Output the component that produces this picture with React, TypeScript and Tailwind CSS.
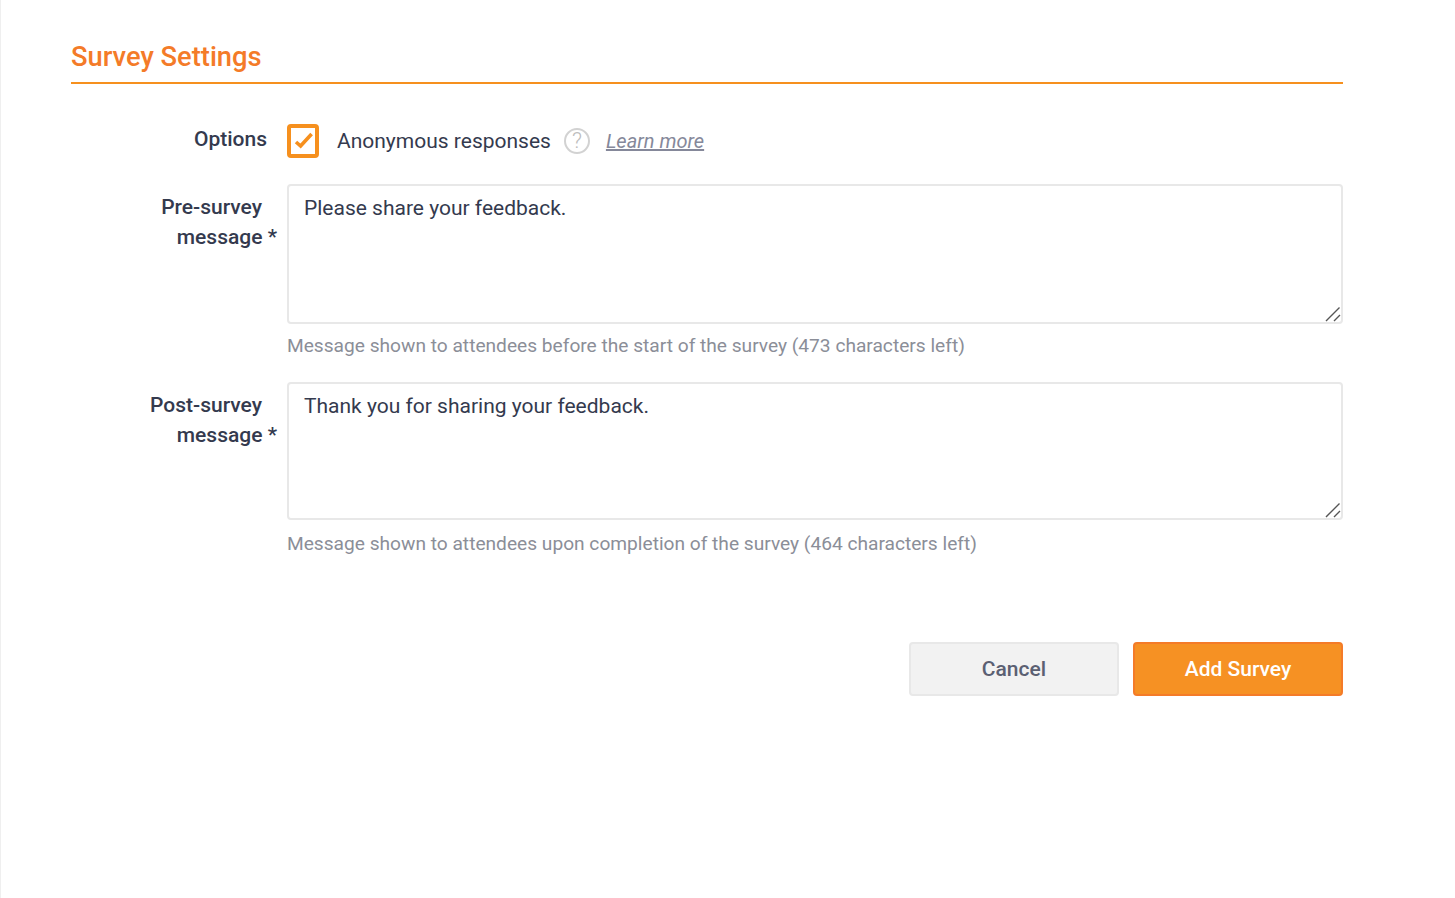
function FieldLabel({ first }: { first: string }) {
  return (
    <div className="w-[206px] shrink-0 pt-[8px] text-right text-[21px] leading-[30px] font-medium text-[#343a4e]">
      <div className="pr-[15px]">{first}</div>
      <div>message *</div>
    </div>
  );
}

function MessageField({
  label,
  value,
  hint,
  height,
  hintGap,
}: {
  label: string;
  value: string;
  hint: string;
  height: string;
  hintGap: string;
}) {
  return (
    <div className="flex gap-[10px]">
      <FieldLabel first={label} />
      <div className="flex-1">
        <div className="relative">
          <textarea
            defaultValue={value}
            className={`${height} block w-full resize-none rounded-[4px] border-2 border-[#e8e8e8] bg-white px-[15px] py-[7px] text-[21px] leading-[30px] text-[#343a4e] outline-none`}
          />
          <svg className="pointer-events-none absolute right-[2px] bottom-[2px] h-[16px] w-[16px]" viewBox="0 0 16 16">
            <path d="M1 15 L14.5 1.5 M9 15 L15 9" stroke="#555" strokeWidth="1.4" fill="none" />
          </svg>
        </div>
        <p className={`${hintGap} text-[19.15px] leading-[30px] text-[#8b8e98]`}>{hint}</p>
      </div>
    </div>
  );
}

export default function App() {
  return (
    <div className="min-h-[898px] border-l border-[#efefef] bg-white pt-[38px] pr-[112px] pl-[70px] font-['Roboto',sans-serif]">
      <h2 className="border-b-2 border-[#f6901e] pb-[6px] text-[27.3px] leading-[38px] font-medium text-[#f47b28]">
        Survey Settings
      </h2>

      <div className="mt-[40px] flex items-center">
        <div className="mb-[4px] w-[196px] text-right text-[21px] leading-[30px] font-medium text-[#343a4e]">
          Options
        </div>
        <div className="ml-[20px] h-[34px] w-[32px] rounded-[4px] border-[4px] border-[#f6901e] bg-white">
          <svg className="h-[26px] w-[24px]" viewBox="0 0 24 26">
            <path d="M5 14 L9.6 18 L20.6 6" stroke="#f6901e" strokeWidth="3.6" fill="none" />
          </svg>
        </div>
        <span className="ml-[18px] text-[21px] leading-[30px] text-[#343a4e]">Anonymous responses</span>
        <span className="ml-[13px] flex h-[26px] w-[26px] items-center justify-center rounded-full border-2 border-[#d2d2d2] text-[22px] leading-none font-light text-[#bdbdbd]">
          ?
        </span>
        <a className="ml-[16px] text-[20px] leading-[30px] text-[#85889a] italic underline">Learn more</a>
      </div>

      <div className="mt-[26px]">
        <MessageField
          label="Pre-survey"
          value="Please share your feedback."
          hint="Message shown to attendees before the start of the survey (473 characters left)"
          height="h-[140px]"
          hintGap="mt-[7px]"
        />
      </div>
      <div className="mt-[21px]">
        <MessageField
          label="Post-survey"
          value="Thank you for sharing your feedback."
          hint="Message shown to attendees upon completion of the survey (464 characters left)"
          height="h-[138px]"
          hintGap="mt-[9px]"
        />
      </div>

      <div className="mt-[83px] flex justify-end gap-[14px]">
        <button className="h-[54px] w-[210px] rounded-[4px] border-2 border-[#e8e8e8] bg-[#f2f2f2] pt-[1px] text-[21px] font-medium text-[#5b6072]">
          Cancel
        </button>
        <button className="h-[54px] w-[210px] rounded-[4px] border-2 border-[#f47b28] bg-[#f69123] pt-[1px] text-[21px] font-medium text-white">
          Add Survey
        </button>
      </div>
    </div>
  );
}
